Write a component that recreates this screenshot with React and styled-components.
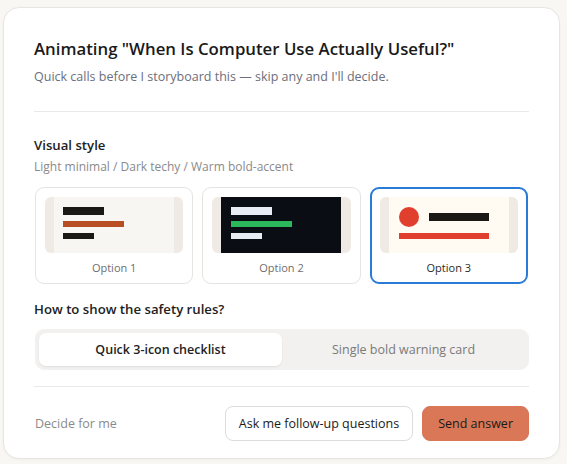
import React from "react";
import styled, { createGlobalStyle, css } from "styled-components";

const Global = createGlobalStyle`
  html, body { margin: 0; padding: 0; background: #f8f7f4; }
  body { font-family: "Open Sans", "Noto Sans", sans-serif; }
  * { box-sizing: border-box; }
`;

const Page = styled.div`
  width: 567px;
  height: 464px;
  padding: 7px 7px 5px 3px;
`;

const Card = styled.div`
  background: #ffffff;
  border: 1px solid #e8e6e1;
  border-radius: 16px;
  box-shadow: 0 1px 3px rgba(0, 0, 0, 0.04);
  padding: 29px 30px 16px 30px;
  display: flex;
  flex-direction: column;
  height: 452px;
`;

const Title = styled.h1`
  margin: 0;
  font-size: 16.8px;
  line-height: 24px;
  font-weight: 600;
  color: #1a1a1a;
`;

const Subtitle = styled.p`
  margin: 6px 0 0;
  font-size: 12.5px;
  line-height: 20px;
  color: #6c6e7c;
`;

const Divider = styled.hr`
  border: 0;
  height: 1px;
  background: #ebe9e5;
  margin: ${(p) => p.$m || "0"};
  width: 100%;
`;

const Label = styled.div`
  font-size: 13.2px;
  line-height: 20px;
  font-weight: 600;
  color: #222;
  margin-top: ${(p) => p.$top || 0}px;
`;

const Hint = styled.div`
  margin-top: 3px;
  font-size: 12px;
  line-height: 18px;
  color: #8a8a8a;
`;

const Options = styled.div`
  margin-top: 11px;
  display: grid;
  grid-template-columns: repeat(3, 1fr);
  gap: 9px;
  padding: 0 1px;
`;

const OptionCard = styled.div`
  border-radius: 9px;
  background: #fff;
  display: flex;
  flex-direction: column;
  align-items: center;
  height: 97px;
  ${(p) =>
    p.$selected
      ? css`
          border: 2px solid #2a7bd6;
          padding: 8px 8px 0;
        `
      : css`
          border: 1px solid #e6e4e0;
          padding: 9px 9px 0;
        `}
`;

const Preview = styled.div`
  width: 100%;
  height: 56px;
  border-radius: 6px;
  background: #efebe4;
  display: flex;
  justify-content: center;
  overflow: hidden;
`;

const Screen = styled.div`
  width: 120px;
  height: 100%;
  background: ${(p) => p.$bg};
  display: flex;
  flex-direction: column;
  gap: 6px;
  padding: 10px 0 0 ${(p) => p.$pl || 10}px;
`;

const Bar = styled.div`
  width: ${(p) => p.$w}px;
  height: ${(p) => p.$h}px;
  background: ${(p) => p.$c};
  flex: none;
`;

const Row = styled.div`
  display: flex;
  align-items: center;
  gap: 10px;
  height: 20px;
`;

const Dot = styled.div`
  width: 20px;
  height: 20px;
  border-radius: 50%;
  background: #e03f2e;
`;

const OptionLabel = styled.div`
  margin-top: 7px;
  font-size: 11px;
  line-height: 16px;
  color: ${(p) => (p.$selected ? "#2a2a2a" : "#6e6e6e")};
`;

const Segmented = styled.div`
  margin-top: 10px;
  margin-left: 1px;
  height: 41px;
  background: #f2f1ef;
  border-radius: 9px;
  padding: 4px;
  display: grid;
  grid-template-columns: 1fr 1fr;
`;

const Segment = styled.div`
  display: flex;
  align-items: center;
  justify-content: center;
  border-radius: 7px;
  font-size: 12.5px;
  font-weight: ${(p) => (p.$active ? 600 : 500)};
  color: ${(p) => (p.$active ? "#222" : "#7a7a7a")};
  background: ${(p) => (p.$active ? "#fff" : "transparent")};
  box-shadow: ${(p) => (p.$active ? "0 1px 2px rgba(0,0,0,0.08)" : "none")};
`;

const Footer = styled.div`
  margin-top: 19px;
  display: flex;
  align-items: center;
  gap: 9px;
  padding-left: 1px;
`;

const Ghost = styled.div`
  font-size: 12.5px;
  color: #8a8a8a;
  margin-right: auto;
`;

const Button = styled.div`
  height: 35px;
  padding: 0 ${(p) => p.$px}px;
  border-radius: 8px;
  display: flex;
  align-items: center;
  font-size: 12.5px;
  font-weight: 500;
  color: #1a1a1a;
  ${(p) =>
    p.$primary
      ? css`
          background: #d97757;
          border: 1px solid #d97757;
        `
      : css`
          background: #fff;
          border: 1px solid #dedcd8;
        `}
`;

export default function App() {
  return (
    <Page>
      <Global />
      <Card>
        <Title>Animating "When Is Computer Use Actually Useful?"</Title>
        <Subtitle>Quick calls before I storyboard this — skip any and I'll decide.</Subtitle>
        <Divider $m="24px 0 0" />
        <Label $top={23}>Visual style</Label>
        <Hint>Light minimal / Dark techy / Warm bold-accent</Hint>
        <Options>
          <OptionCard>
            <Preview>
              <Screen $bg="#f8f6f2" $pl={9}>
                <Bar $w={41} $h={8} $c="#1b1915" />
                <Bar $w={61} $h={6} $c="#b84c22" />
                <Bar $w={31} $h={6} $c="#1b1915" />
              </Screen>
            </Preview>
            <OptionLabel>Option 1</OptionLabel>
          </OptionCard>
          <OptionCard>
            <Preview>
              <Screen $bg="#0a0d14">
                <Bar $w={41} $h={8} $c="#e8ebf3" />
                <Bar $w={61} $h={6} $c="#2bb95b" />
                <Bar $w={31} $h={6} $c="#e8ebf3" />
              </Screen>
            </Preview>
            <OptionLabel>Option 2</OptionLabel>
          </OptionCard>
          <OptionCard $selected>
            <Preview>
              <Screen $bg="#fffaf2">
                <Row>
                  <Dot />
                  <Bar $w={60} $h={8} $c="#1b1915" />
                </Row>
                <Bar $w={90} $h={6} $c="#e03f2e" />
              </Screen>
            </Preview>
            <OptionLabel $selected>Option 3</OptionLabel>
          </OptionCard>
        </Options>
        <Label $top={15}>How to show the safety rules?</Label>
        <Segmented>
          <Segment $active>Quick 3-icon checklist</Segment>
          <Segment>Single bold warning card</Segment>
        </Segmented>
        <Divider $m="16px 0 0" />
        <Footer>
          <Ghost>Decide for me</Ghost>
          <Button $px={13}>Ask me follow-up questions</Button>
          <Button $primary $px={15}>Send answer</Button>
        </Footer>
      </Card>
    </Page>
  );
}
